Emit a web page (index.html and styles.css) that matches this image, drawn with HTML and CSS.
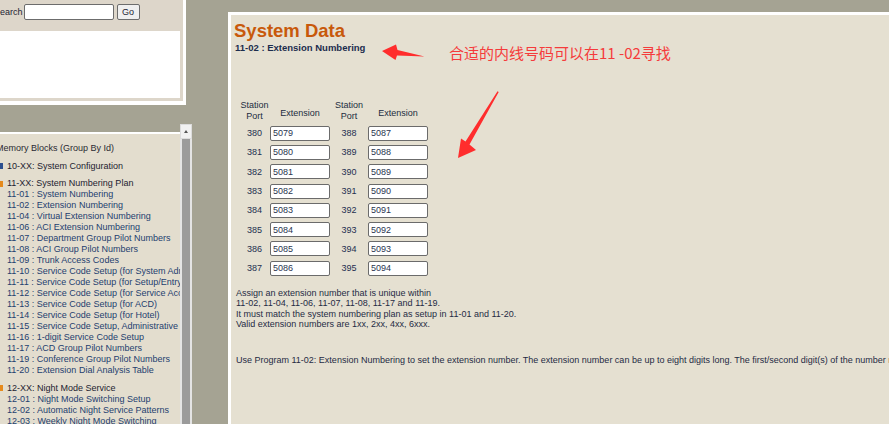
FILE: index.html
```html
<!DOCTYPE html>
<html lang="en">
<head>
    <meta charset="UTF-8">
    <title>System Data</title>
    <link rel="stylesheet" href="styles.css">
</head>
<body>
    <div class="page">
        <aside class="sidebar">
            <div class="search-panel">
                <div class="search-inner">
                    <form class="search-bar">
                        <label class="search-label">Search</label>
                        <input type="text" class="search-input">
                        <button type="button" class="go-btn">Go</button>
                    </form>
                    <div class="search-body"></div>
                </div>
            </div>
            <div class="menu-wrap">
                <div class="menu">
                    <div class="menu-title">Memory Blocks (Group By Id)</div>
                    <div class="group">
                        <div class="group-head"><span class="icon closed"></span>10-XX: System Configuration</div>
                    </div>
                    <div class="group">
                        <div class="group-head"><span class="icon open"></span>11-XX: System Numbering Plan</div>
                        <div class="item">11-01 : System Numbering</div>
                        <div class="item">11-02 : Extension Numbering</div>
                        <div class="item">11-04 : Virtual Extension Numbering</div>
                        <div class="item">11-06 : ACI Extension Numbering</div>
                        <div class="item">11-07 : Department Group Pilot Numbers</div>
                        <div class="item">11-08 : ACI Group Pilot Numbers</div>
                        <div class="item">11-09 : Trunk Access Codes</div>
                        <div class="item">11-10 : Service Code Setup (for System Administrator)</div>
                        <div class="item">11-11 : Service Code Setup (for Setup/Entry Operation)</div>
                        <div class="item">11-12 : Service Code Setup (for Service Access)</div>
                        <div class="item">11-13 : Service Code Setup (for ACD)</div>
                        <div class="item">11-14 : Service Code Setup (for Hotel)</div>
                        <div class="item">11-15 : Service Code Setup, Administrative</div>
                        <div class="item">11-16 : 1-digit Service Code Setup</div>
                        <div class="item">11-17 : ACD Group Pilot Numbers</div>
                        <div class="item">11-19 : Conference Group Pilot Numbers</div>
                        <div class="item">11-20 : Extension Dial Analysis Table</div>
                    </div>
                    <div class="group">
                        <div class="group-head"><span class="icon open"></span>12-XX: Night Mode Service</div>
                        <div class="item">12-01 : Night Mode Switching Setup</div>
                        <div class="item">12-02 : Automatic Night Service Patterns</div>
                        <div class="item">12-03 : Weekly Night Mode Switching</div>
                    </div>
                </div>
                <div class="scrollbar">
                    <div class="scroll-btn"></div>
                    <div class="scroll-track"></div>
                </div>
            </div>
        </aside>

        <main class="content">
            <h1 class="title">System Data</h1>
            <h2 class="subtitle">11-02 : Extension Numbering</h2>

            <div class="ext-grid">
                <div class="hd">Station<br>Port</div>
                <div class="hd hd-ext">Extension</div>
                <div class="hd">Station<br>Port</div>
                <div class="hd hd-ext">Extension</div>

                <div class="port">380</div><input class="ext" value="5079">
                <div class="port">388</div><input class="ext" value="5087">
                <div class="port">381</div><input class="ext" value="5080">
                <div class="port">389</div><input class="ext" value="5088">
                <div class="port">382</div><input class="ext" value="5081">
                <div class="port">390</div><input class="ext" value="5089">
                <div class="port">383</div><input class="ext" value="5082">
                <div class="port">391</div><input class="ext" value="5090">
                <div class="port">384</div><input class="ext" value="5083">
                <div class="port">392</div><input class="ext" value="5091">
                <div class="port">385</div><input class="ext" value="5084">
                <div class="port">393</div><input class="ext" value="5092">
                <div class="port">386</div><input class="ext" value="5085">
                <div class="port">394</div><input class="ext" value="5093">
                <div class="port">387</div><input class="ext" value="5086">
                <div class="port">395</div><input class="ext" value="5094">
            </div>

            <p class="help">
                Assign an extension number that is unique within<br>
                11-02, 11-04, 11-06, 11-07, 11-08, 11-17 and 11-19.<br>
                It must match the system numbering plan as setup in 11-01 and 11-20.<br>
                Valid extension numbers are 1xx, 2xx, 4xx, 6xxx.
            </p>
            <p class="help long">Use Program 11-02: Extension Numbering to set the extension number. The extension number can be up to eight digits long. The first/second digit(s) of the number must be assigned in Program 11-01.</p>
        </main>
    </div>

    <!-- red annotation drawn over the screenshot -->
    <svg class="marks" width="889" height="424" viewBox="0 0 889 424">
        <polygon points="382,51 396,44.5 397.5,50 424.5,56.5 397,55.5 395.5,60" fill="#ff2d2d"/>
        <polygon points="458,158 461,138.5 465.5,141.5 497.5,91.2 498.7,92 469.5,144.5 476,150" fill="#ff2d2d"/>
    </svg>
    <div class="note">合适的内线号码可以在11 -02寻找</div>
</body>
</html>
```

FILE: styles.css
```css
body {
    margin: 0;
    height: 424px;
    overflow: hidden;
    position: relative;
    background: #a5a393;
    font-family: "Liberation Sans", Arial, sans-serif;
    font-size: 9px;
}
.page {
    display: flex;
    align-items: flex-start;
}

/* left column */
.sidebar {
    flex: none;
    width: 200px;
    margin-left: -8px;
}
.search-panel {
    width: 191px;
    background: #fff;
    padding: 0 3px 4px 0;
}
.search-inner {
    background: #ddd6ca;
    padding: 0 3px 3px 0;
}
.search-bar {
    display: flex;
    align-items: center;
    height: 31px;
    margin: 0;
    padding-bottom: 7px;
    box-sizing: border-box;
}
.search-label {
    margin: 0 1px 0 2px;
    color: #1d2433;
    font-size: 9px;
}
.search-input {
    width: 90px;
    height: 16px;
    box-sizing: border-box;
    margin: 0;
    border: 1px solid #6c6c6c;
    border-radius: 2px;
    background: #fff;
}
.go-btn {
    width: 23px;
    height: 16px;
    margin: 0 0 0 3px;
    padding: 0;
    border: 1px solid #6c6c6c;
    border-radius: 2px;
    background: #efefef;
    font-family: "Liberation Sans", Arial, sans-serif;
    font-size: 9px;
    color: #1d2433;
}
.search-body {
    height: 67px;
    background: #fff;
}

.menu-wrap {
    display: flex;
    margin-top: 19px;
}
.menu {
    width: 188px;
    height: 292px;
    margin-top: 8px;
    border-top: 2px solid #fff;
    background: #e3ddce;
    overflow: hidden;
    white-space: nowrap;
    padding-top: 9px;
    box-sizing: border-box;
    line-height: 11px;
}
.menu-title {
    padding-left: 4px;
    color: #2a2a32;
}
.group {
    margin-top: 6.5px;
}
.group-head {
    display: flex;
    align-items: center;
    color: #1d2230;
}
.icon {
    width: 6px;
    height: 6px;
    margin: 0 4px 0 5px;
}
.icon.closed {
    background: #2c4f8f;
}
.icon.open {
    background: #e68a1c;
}
.item {
    padding-left: 15px;
    color: #24406f;
}
.scrollbar {
    width: 12px;
    height: 300px;
    display: flex;
    flex-direction: column;
}
.scroll-btn {
    height: 15px;
    background: #f1f1f1;
    border: 1px solid #dcdcdc;
    box-sizing: border-box;
    position: relative;
}
.scroll-btn::after {
    content: "";
    position: absolute;
    left: 3px;
    top: 5px;
    border-left: 2.5px solid transparent;
    border-right: 2.5px solid transparent;
    border-bottom: 3px solid #555;
}
.scroll-track {
    flex: 1;
    background: #9b9b9b;
    border-left: 2px solid #e4e4e4;
    border-right: 2px solid #e4e4e4;
}

/* main panel */
.content {
    flex: 1;
    min-width: 0;
    height: 412px;
    margin: 12px 0 0 36px;
    padding: 5px 0 0 4px;
    border-top: 3px solid #fff;
    border-left: 3px solid #fff;
    background: #e5e0d1;
    overflow: hidden;
    box-sizing: border-box;
    color: #1f2b44;
}
.title {
    margin: 0 0 0 -1px;
    font-size: 18.5px;
    line-height: 22px;
    font-weight: bold;
    color: #c8590b;
}
.subtitle {
    margin: 0;
    font-size: 9.5px;
    line-height: 12px;
    font-weight: bold;
    color: #1c2d4d;
}
.ext-grid {
    display: grid;
    grid-template-columns: 31px 60px 38px 60px;
    grid-template-rows: 21.4px;
    grid-auto-rows: 15px;
    row-gap: 4.3px;
    margin: 46px 0 0 4px;
    color: #1e2f50;
}
.hd {
    display: flex;
    align-items: center;
    justify-content: center;
    text-align: center;
    line-height: 10.7px;
    color: #222d40;
}
.hd-ext {
    padding-top: 6px;
}
.port {
    display: flex;
    align-items: center;
    justify-content: center;
}
.ext {
    width: 60px;
    height: 15px;
    box-sizing: border-box;
    margin: 0;
    padding: 0 2px;
    border: 1px solid #6b6b6b;
    border-radius: 2px;
    background: #fff;
    font-family: "Liberation Sans", Arial, sans-serif;
    font-size: 9px;
    color: #2a3550;
}
.help {
    margin: 12px 0 0 1px;
    line-height: 10.5px;
}
.help.long {
    margin-top: 25px;
    white-space: nowrap;
}

/* annotation */
.marks {
    position: absolute;
    left: 0;
    top: 0;
    pointer-events: none;
}
.note {
    position: absolute;
    left: 449px;
    top: 43px;
    font-family: "Noto Sans CJK SC", sans-serif;
    font-size: 15px;
    line-height: 20px;
    color: #f53b3b;
}
```
